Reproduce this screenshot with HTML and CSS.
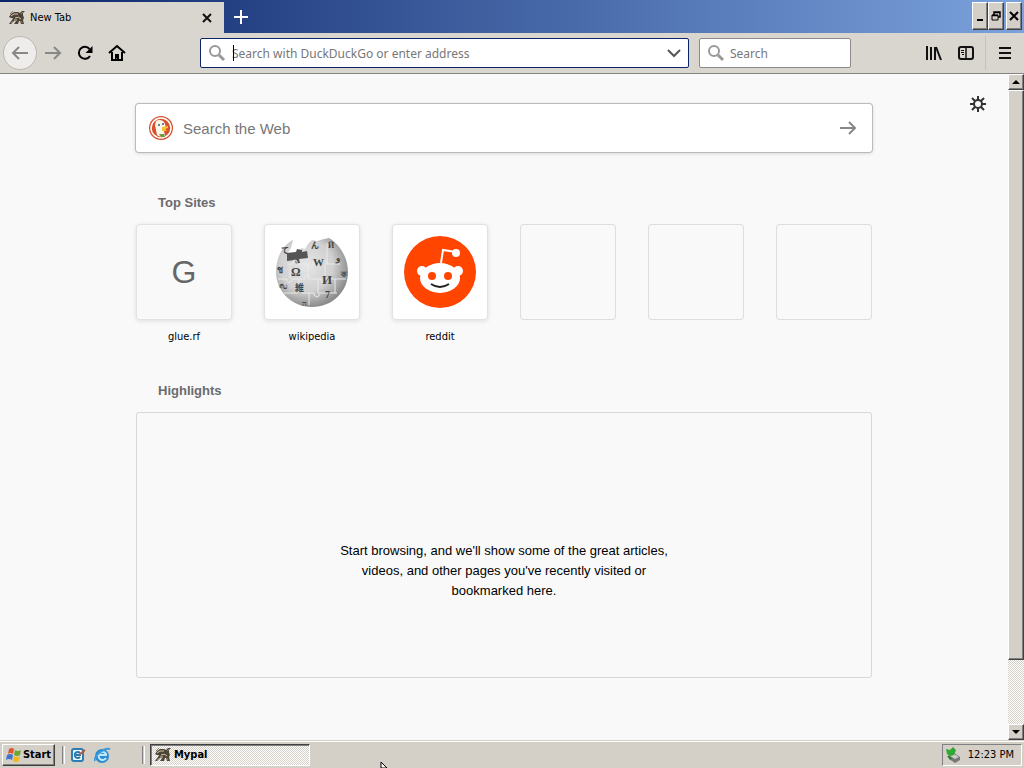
FILE: index.html
```
<!DOCTYPE html>
<html lang="en">
<head>
<meta charset="utf-8">
<title>New Tab</title>
<link rel="stylesheet" href="styles.css">
</head>
<body>
	<svg class="defs" width="0" height="0" aria-hidden="true">
		<symbol id="cat" viewBox="0 0 16 16">
			<path d="M0 7l2-3 3-2 4 0 2 1 2-2 3 0-2 2 0 2 1 3-1 2 1 4h-3l-1-3-1 0-1 3H5l2-3-2 0-3 3H0l3-4 1-2-2 0z" fill="#4d4538"/>
			<path d="M2 6l3-2 4 0M6 8q4-2 6 1M5 10h3" fill="none" stroke="#d5c8a8"/>
			<path d="M4 11l-2 2M12 4l2-2M12 11l1 2M1 4l3-3" fill="none" stroke="#8f7b55"/>
		</symbol>
		<symbol id="glass" viewBox="0 0 18 18">
			<circle cx="7" cy="7" r="5" fill="none" stroke="#999" stroke-width="2"/>
			<path d="M11 11l5 5" stroke="#999" stroke-width="3"/>
		</symbol>
	</svg>

	<div class="tabbar">
		<div class="tab">
			<svg class="icon16"><use href="#cat"/></svg>
			<span class="tab-title">New Tab</span>
			<button class="plain tab-close" aria-label="Close tab"><svg width="10" height="10"><path d="M1 1l8 8M9 1L1 9" stroke="#111" stroke-width="2"/></svg></button>
		</div>
		<button class="plain new-tab" aria-label="New tab"><svg width="16" height="16"><path d="M8 1v14M1 8h14" stroke="#fff" stroke-width="2"/></svg></button>
		<div class="winbuttons">
			<button class="raised" aria-label="Minimize"><svg width="10" height="12"><path d="M2 10h6" stroke="#000" stroke-width="2"/></svg></button>
			<button class="raised" aria-label="Restore"><svg width="10" height="12"><path d="M3 5V2h6v5H7M3 2.500h6M1 5.500h6" fill="none" stroke="#000" stroke-width="1.500"/><path d="M1 5h6v5H1z" fill="none" stroke="#000"/></svg></button>
			<button class="raised close" aria-label="Close"><svg width="10" height="12"><path d="M1 2l8 8M9 2l-8 8" stroke="#000" stroke-width="2"/></svg></button>
		</div>
	</div>

	<div class="navbar">
		<button class="plain back" aria-label="Back"><svg width="18" height="16"><path d="M17 8H2M8 2L2 8l6 6" fill="none" stroke="#888" stroke-width="2"/></svg></button>
		<button class="plain nav" aria-label="Forward"><svg width="18" height="16"><path d="M1 8h15M10 2l6 6-6 6" fill="none" stroke="#888" stroke-width="2"/></svg></button>
		<button class="plain nav" aria-label="Reload"><svg width="16" height="16"><path d="M13 11a6 6 0 1 1-.5-7" fill="none" stroke="#000" stroke-width="2"/><path d="M15.500 1v7h-7z"/></svg></button>
		<button class="plain nav" aria-label="Home"><svg width="18" height="18"><path d="M1 9l8-7 8 7" fill="none" stroke="#000" stroke-width="2"/><path d="M4 8v8h10V8" fill="none" stroke="#000" stroke-width="2"/><path d="M7 16v-6h4v6H9v-2z"/></svg></button>
		<div class="spring"></div>
		<div class="urlbar">
			<svg class="glass"><use href="#glass"/></svg>
			<span class="caret"></span>
			<input type="text" aria-label="Address" placeholder="Search with DuckDuckGo or enter address">
			<button class="plain" aria-label="Show history"><svg width="14" height="10"><path d="M1 2l6 6 6-6" fill="none" stroke="#555" stroke-width="2"/></svg></button>
		</div>
		<div class="searchbar">
			<svg class="glass"><use href="#glass"/></svg>
			<input type="text" aria-label="Search" placeholder="Search">
		</div>
		<div class="spring"></div>
		<button class="plain nav" aria-label="Library"><svg width="16" height="16"><path d="M1 1v14M5 2v13M9 2v13" stroke="#111" stroke-width="2"/><path d="M10 2l5 13" stroke="#111" stroke-width="2"/></svg></button>
		<button class="plain nav" aria-label="Sidebars"><svg width="16" height="16"><rect x="1" y="2" width="14" height="12" rx="2" fill="none" stroke="#111" stroke-width="2"/><path d="M8 2v12" stroke="#111" stroke-width="1.500"/><path d="M3 5.500h3M3 7.500h3M4 9.500h2" stroke="#111"/></svg></button>
		<button class="plain menu" aria-label="Menu"><svg width="12" height="12"><path d="M0 1h12M0 6h12M0 11h12" stroke="#111" stroke-width="2"/></svg></button>
	</div>

	<div class="view">
		<div class="page">
			<button class="plain gear" aria-label="Customize"><svg width="16" height="16"><circle cx="8" cy="8" r="4" fill="none" stroke="#333" stroke-width="2"/><path d="M8 0v4M8 12v4M0 8h4M12 8h4M2 2l3 3M11 11l3 3M14 2l-3 3M5 11l-3 3" stroke="#333" stroke-width="2"/></svg></button>
			<div class="inner">
				<div class="websearch">
					<svg width="24" height="24">
						<circle cx="12" cy="12" r="12" fill="#d9502f"/>
						<circle cx="12" cy="12" r="10" fill="none" stroke="#fff" stroke-width="1.500"/>
						<path d="M7 5c3-2 8-1 9 3l1 4-2 3 1 5c-3 1-6 1-8-1L6 9z" fill="#f8f5ea"/>
						<path d="M13 11l6-1v2l-4 1 3 1-1 1h-4z" fill="#f5bf31"/>
						<path d="M10 18l5 0 1 3-4 0z" fill="#6b9a40"/>
						<circle cx="10" cy="9" r="1" fill="#456"/><circle cx="14" cy="8" r="1" fill="#456"/>
					</svg>
					<input type="text" aria-label="Search the Web" placeholder="Search the Web">
					<button class="plain" aria-label="Go"><svg width="18" height="16"><path d="M1 8h15M10 2l6 6-6 6" fill="none" stroke="#888" stroke-width="2"/></svg></button>
				</div>

				<h3>Top Sites</h3>
				<div class="sites">
					<a class="site" href="#"><span class="tile letter">G</span>glue.rf</a>
					<a class="site" href="#"><span class="tile white">
						<svg width="74" height="74" viewBox="0 0 74 74">
							<defs><radialGradient id="globe" cx="42%" cy="40%" r="62%"><stop offset="0" stop-color="#e6e6e6"/><stop offset=".6" stop-color="#d0d0d0"/><stop offset="1" stop-color="#888"/></radialGradient></defs>
							<path d="M18 5l-2 8-3 5 12-2 1-3 4 1 3-5 4-4 5 1 7-2 5-1c9 5 19 18 19 34 0 20-16 35-36 35S1 56 1 37C1 22 8 10 18 5z" fill="url(#globe)"/>
							<path d="M12 18l9-1 1-3 5 1v2l5-1 1 7-9 1 1 4-4 1-1-4-8 1z" fill="#555"/>
							<g fill="none" stroke="#e9e9e9">
								<path d="M12 29h6q-1-4 2-4t2 4h10q0 4 3 4t2-4h10q-1-4 2-4t2 4h14M3 44h9q0 4 3 3t2-3h13q-1-4 2-4t2 4h12q0 4 3 4t2-4h20M9 58h14q-1-4 2-4t2 4h12q0 4 3 4t2-4h18"/>
								<path d="M15 29v15M33 29v15M52 8v21M50 29v15M24 44v14M43 44v14M60 44v14M34 58v12"/>
							</g>
							<g class="glyphs">
								<text x="16" y="41" font-size="12">Ω</text><text x="38" y="31" font-size="11">W</text><text x="47" y="49" font-size="13">И</text>
								<text x="20" y="56" font-size="9">維</text><text x="50" y="63" font-size="10">7</text><text x="36" y="13" font-size="8">ん</text>
								<text x="2" y="38" font-size="9">ช</text><text x="4" y="53" font-size="9">வ</text><text x="61" y="26" font-size="9">و</text>
								<text x="53" y="13" font-size="8">Й</text><text x="27" y="71" font-size="8">ה</text><text x="6" y="18" font-size="8">て</text><text x="66" y="42" font-size="8">ক</text>
							</g>
						</svg></span>wikipedia</a>
					<a class="site" href="#"><span class="tile white">
						<svg width="72" height="72" viewBox="0 0 72 72">
							<circle cx="36" cy="36" r="36" fill="#ff4500"/>
							<path d="M37 27l2-13 13 2" fill="none" stroke="#fff" stroke-width="2"/>
							<g fill="#fff"><circle cx="52" cy="17" r="4"/><circle cx="18" cy="35" r="5"/><circle cx="54" cy="35" r="5"/><ellipse cx="36" cy="42" rx="20" ry="15"/></g>
							<circle cx="28" cy="40" r="4" fill="#ff4500"/><circle cx="44" cy="40" r="4" fill="#ff4500"/>
							<path d="M27 48q9 6 18 0" fill="none" stroke="#222" stroke-width="2"/>
						</svg></span>reddit</a>
					<div class="site"><span class="tile empty"></span></div>
					<div class="site"><span class="tile empty"></span></div>
					<div class="site"><span class="tile empty"></span></div>
				</div>

				<h3>Highlights</h3>
				<div class="highlights">
					<p>Start browsing, and we'll show some of the great articles, videos, and other pages you've recently visited or bookmarked here.</p>
				</div>
			</div>
		</div>
		<div class="scrollbar">
			<button class="raised" aria-label="Scroll up"><svg width="8" height="4"><path d="M4 0l4 4H0z"/></svg></button>
			<div class="raised thumb"></div>
			<div class="track"></div>
			<button class="raised" aria-label="Scroll down"><svg width="8" height="4"><path d="M0 0h8L4 4z"/></svg></button>
		</div>
	</div>

	<div class="taskbar">
		<button class="raised start">
			<svg width="16" height="16"><path d="M3 2q3-2 5 0L7 7Q4 5 2 7z" fill="#e2562b"/><path d="M9 3q3 2 6 0l-1 5q-3 2-6 0z" fill="#69a833"/><path d="M1 8q3-2 6 0l-1 5q-3-2-6 0z" fill="#3f74d0"/><path d="M8 9q3 2 6 0l-1 5q-3 2-6 0z" fill="#f0b921"/></svg>Start</button>
		<span class="grip"></span>
		<div class="quick">
			<svg width="16" height="16"><rect x="1" y="1" width="13" height="14" rx="3" fill="#2c7cb5"/><rect x="3" y="3" width="9" height="10" rx="1" fill="#eef7fc"/><path d="M10 6a3 3 0 1 0 0 4M6 8h5" fill="none" stroke="#2879b2" stroke-width="2"/><path d="M9 8l6-5" stroke="#b55b3c" stroke-width="2"/></svg>
			<svg width="17" height="16"><circle cx="8" cy="9" r="7" fill="#2a8bd0"/><path d="M12 11a4 4 0 1 1 0-4v1H5" fill="none" stroke="#bfe8fb" stroke-width="2"/><path d="M1 14C-1 10 10 0 16 2" fill="none" stroke="#3a9bdc" stroke-width="2"/></svg>
		</div>
		<span class="grip"></span>
		<button class="task"><svg class="icon16"><use href="#cat"/></svg>Mypal</button>
		<div class="tray">
			<svg width="16" height="16"><path d="M4 9l5-3 6 4v3l-5 3-6-4z" fill="#777"/><path d="M5 9l4-2 5 3-4 2z" fill="#ccc"/><path d="M1 2l4 1 3-3 3 3-2 5-4 1-3-2z" fill="#2fa834"/><path d="M3 9l3 3" stroke="#267a2a" stroke-width="2"/></svg>
			<span>12:23 PM</span>
		</div>
		<svg class="pointer" width="10" height="6"><path d="M1 0v6h6z" fill="#fff" stroke="#000"/></svg>
	</div>
</body>
</html>
```

FILE: styles.css
```
* {
	box-sizing: border-box;
}

body {
	margin: 0;
	height: 100vh;
	display: flex;
	flex-direction: column;
	overflow: hidden;
	font: 11px "DejaVu Sans Condensed", "Noto Sans", sans-serif;
	color: #000;
	background: #d9d6cf;
}

.defs {
	position: absolute;
}

svg {
	flex: none;
}

button {
	font: inherit;
	color: inherit;
	padding: 0;
	display: flex;
	align-items: center;
	justify-content: center;
}

.plain {
	border: none;
	background: none;
}

.raised {
	border: 1px solid;
	border-color: #fff #404040 #404040 #fff;
	background: #d4d0c8;
	box-shadow: inset -1px -1px 0 #808080;
}

.icon16 {
	width: 16px;
	height: 16px;
}

/* tabs */
.tabbar {
	height: 33px;
	flex: none;
	display: flex;
	align-items: stretch;
	background: linear-gradient(90deg, #0a246a, #7ba2dc);
}

.tab {
	width: 224px;
	margin-top: 2px;
	padding: 0 10px 0 9px;
	display: flex;
	align-items: center;
	background: #d9d6cf;
}

.tab-title {
	flex: 1;
	margin-left: 5px;
}

.tab-close {
	width: 15px;
	height: 20px;
}

.new-tab {
	width: 34px;
}

.winbuttons {
	margin-left: auto;
	padding: 2px 2px 2px 0;
	display: flex;
}

.winbuttons button {
	width: 16px;
	height: 28px;
}

.winbuttons .close {
	margin-left: 2px;
}

/* toolbar */
.navbar {
	height: 41px;
	flex: none;
	padding: 0 1px 0 3px;
	display: flex;
	align-items: center;
	background: #d9d6cf;
	border-bottom: 1px solid #85837f;
}

.nav {
	width: 32px;
	height: 32px;
}

.back {
	width: 34px;
	height: 34px;
	border: 1px solid #bbb8b1;
	border-radius: 50%;
	background: #eeedeb;
}

.spring {
	width: 67px;
}

.urlbar,
.searchbar {
	height: 30px;
	padding: 0 7px;
	display: flex;
	align-items: center;
	background: #fff;
	border: 1px solid #8d8b88;
	border-radius: 2px;
}

.urlbar {
	flex: 1;
	border-color: #0a246a;
	position: relative;
}

.searchbar {
	width: 152px;
	margin-left: 10px;
}

.glass {
	width: 18px;
	height: 18px;
}

.caret {
	position: absolute;
	left: 32px;
	width: 1px;
	height: 16px;
	background: #000;
}

input {
	flex: 1;
	min-width: 0;
	border: none;
	outline: none;
	padding: 0;
	background: none;
	font: 12px "Noto Sans", sans-serif;
}

.urlbar input {
	margin-left: 6px;
}

.searchbar input {
	margin-left: 5px;
}

input::placeholder {
	color: #777;
	opacity: 1;
}

.menu {
	width: 38px;
	height: 34px;
	margin-left: 3px;
	border-left: 1px solid #c5c2bb;
}

/* new tab page */
.view {
	flex: 1;
	min-height: 0;
	display: flex;
}

.page {
	flex: 1;
	position: relative;
	overflow: hidden;
	background: #f9f9fa;
}

.gear {
	position: absolute;
	top: 22px;
	right: 22px;
}

.inner {
	width: 736px;
	max-width: 90%;
	margin: 0 auto;
	padding-top: 30px;
}

.websearch {
	height: 48px;
	padding: 0 15px 0 13px;
	display: flex;
	align-items: center;
	background: #fff;
	border-radius: 3px;
	box-shadow: 0 0 0 1px #bbb, 0 1px 4px #ccc;
}

.websearch input {
	margin-left: 10px;
	font: 15px "Liberation Sans", sans-serif;
}

h3 {
	margin: 41px 0 11px 22px;
	font: bold 13px/20px "Liberation Sans", sans-serif;
	color: #6b6b6d;
}

.sites {
	display: grid;
	grid-template-columns: repeat(6, 96px);
	justify-content: space-between;
	margin-bottom: 36px;
}

.sites + h3 {
	margin-top: 0;
}

.site {
	color: #000;
	text-align: center;
	text-decoration: none;
	line-height: 16px;
}

.tile {
	height: 96px;
	margin-bottom: 9px;
	display: flex;
	align-items: center;
	justify-content: center;
	border-radius: 4px;
	box-shadow: inset 0 0 0 1px #e2e2e2, 0 1px 4px #ddd;
}

.white {
	background: #fff;
}

.empty {
	box-shadow: inset 0 0 0 1px #ddd;
}

.letter {
	font: 32px "Liberation Sans", sans-serif;
	color: #666;
}

.glyphs {
	font-family: "Liberation Serif", "Noto Sans CJK JP", serif;
	font-weight: bold;
	fill: #444;
}

.highlights {
	height: 266px;
	padding-top: 52px;
	display: flex;
	align-items: center;
	justify-content: center;
	border: 1px solid #d7d7db;
	border-radius: 3px;
}

.highlights p {
	width: 350px;
	margin: 0;
	text-align: center;
	font: 13px/20px "Liberation Sans", sans-serif;
}

/* scrollbar */
.scrollbar {
	width: 16px;
	display: flex;
	flex-direction: column;
}

.scrollbar button {
	height: 16px;
}

.thumb {
	flex: 570;
}

.track,
.task {
	background: repeating-conic-gradient(#fff 0 25%, #d4d0c8 0 50%) 0 0 / 2px 2px;
}

.track {
	flex: 64;
}

/* taskbar */
.taskbar {
	height: 28px;
	flex: none;
	padding: 2px;
	display: flex;
	align-items: center;
	position: relative;
	background: #d4d0c8;
	border-top: 1px solid #d4d0c8;
	box-shadow: inset 0 1px 0 #fff;
}

.start {
	width: 53px;
	height: 22px;
	gap: 1px;
	font-weight: bold;
}

.grip {
	width: 3px;
	height: 18px;
	margin: 0 5px 0 7px;
	border-left: 1px solid #808080;
	border-right: 1px solid #fff;
}

.quick {
	width: 65px;
	display: flex;
	gap: 8px;
}

.task {
	width: 160px;
	height: 22px;
	padding-left: 4px;
	gap: 3px;
	justify-content: flex-start;
	font-weight: bold;
	border: 1px solid;
	border-color: #404040 #fff #fff #404040;
	box-shadow: inset 1px 1px 0 #808080;
}

.tray {
	height: 22px;
	margin-left: auto;
	padding: 0 7px 0 2px;
	display: flex;
	align-items: center;
	gap: 7px;
	border: 1px solid;
	border-color: #808080 #fff #fff #808080;
}

.pointer {
	position: absolute;
	left: 380px;
	bottom: 0;
}
```
